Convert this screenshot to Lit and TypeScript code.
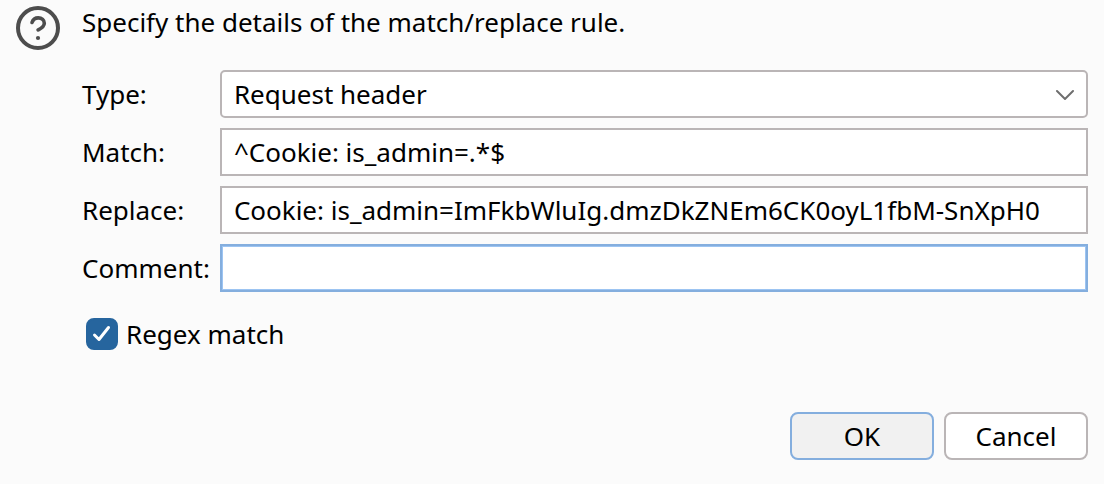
import { LitElement, html, css } from "lit";
import { customElement } from "lit/decorators.js";

@customElement("app-root")
export class AppRoot extends LitElement {
  static styles = css`
    :host {
      display: block;
      box-sizing: border-box;
      min-height: 100vh;
      padding: 4px 16px 24px;
      background: #fbfbfb;
      color: #000;
      font: 26px/36px "Noto Sans", sans-serif;
    }
    * { box-sizing: border-box; }
    .dialog { display: grid; grid-template-columns: 44px 1fr; column-gap: 22px; margin: 0; }
    .help { width: 44px; height: 44px; margin-top: 2px; }
    .intro { margin: 0 0 30px; }
    .fields { display: grid; grid-template-columns: auto 1fr; align-items: center; gap: 10px; }
    .control {
      width: 100%;
      height: 48px;
      margin: 0;
      padding: 0 12px;
      border: 2px solid #bab5b6;
      border-radius: 0;
      background: #fff;
      color: inherit;
      font: inherit;
      outline: none;
      appearance: none;
    }
    .picker { display: grid; align-items: center; }
    .picker > * { grid-area: 1 / 1; }
    .picker .control { border-radius: 5px; }
    .chevron { justify-self: end; width: 20px; height: 12px; margin-right: 13px; pointer-events: none; }
    .active { border-color: #84aede; box-shadow: inset 0 0 0 1px #9cc4f2; }
    .option { display: flex; align-items: center; gap: 8px; margin: 24px 0 60px 4px; }
    .tick { display: grid; }
    .tick > * { grid-area: 1 / 1; width: 32px; height: 32px; margin: 0; }
    .box { appearance: none; border-radius: 8px; border: 2px solid #bab5b6; background: #fff; }
    .box:checked { background: #26659e; border-color: #26659e; }
    .tick svg { pointer-events: none; visibility: hidden; z-index: 1; }
    .box:checked + svg { visibility: visible; }
    .actions { display: flex; justify-content: flex-end; gap: 10px; }
    .button {
      width: 144px;
      height: 48px;
      padding: 0;
      border: 2px solid #bab5b6;
      border-radius: 8px;
      background: #fff;
      color: inherit;
      font: inherit;
    }
    .default { background: #f1f1f1; border-color: #84aede; }
  `;

  render() {
    return html`
      <form class="dialog" @submit=${(e: Event) => e.preventDefault()}>
        <svg class="help" viewBox="0 0 44 44" fill="none" stroke="#4d4d4d" stroke-width="4" aria-hidden="true">
          <circle cx="22" cy="22" r="20" />
          <path d="M16 16.500C17 13.500 19.400 11.900 22.300 11.900c3.400 0 6 2.300 6 5.400 0 3.600-3 5-6.200 6.600" stroke-width="3.600" stroke-linecap="round" />
          <circle cx="22" cy="32" r="2.100" fill="#4d4d4d" stroke="none" />
        </svg>
        <div>
          <p class="intro">Specify the details of the match/replace rule.</p>
          <div class="fields">
            <label for="type">Type:</label>
            <div class="picker">
              <select class="control" id="type"><option>Request header</option></select>
              <svg class="chevron" viewBox="0 0 20 12" fill="none" stroke="#6e6e6e" stroke-width="2" stroke-linecap="round" aria-hidden="true">
                <path d="M2 3l8 8 8-8" />
              </svg>
            </div>
            <label for="match">Match:</label>
            <input class="control" id="match" type="text" value="^Cookie: is_admin=.*$" />
            <label for="replace">Replace:</label>
            <input class="control" id="replace" type="text" value="Cookie: is_admin=ImFkbWluIg.dmzDkZNEm6CK0oyL1fbM-SnXpH0" />
            <label for="comment">Comment:</label>
            <input class="control active" id="comment" type="text" />
          </div>
          <div class="option">
            <span class="tick">
              <input class="box" id="regex" type="checkbox" checked />
              <svg viewBox="0 0 32 32" fill="none" stroke="#fff" stroke-width="3" stroke-linecap="round" stroke-linejoin="round" aria-hidden="true">
                <path d="m8.500 17 4.500 4.500L22.500 9.500" />
              </svg>
            </span>
            <label for="regex">Regex match</label>
          </div>
          <div class="actions">
            <button class="button default" type="submit">OK</button>
            <button class="button" type="button">Cancel</button>
          </div>
        </div>
      </form>
    `;
  }
}
